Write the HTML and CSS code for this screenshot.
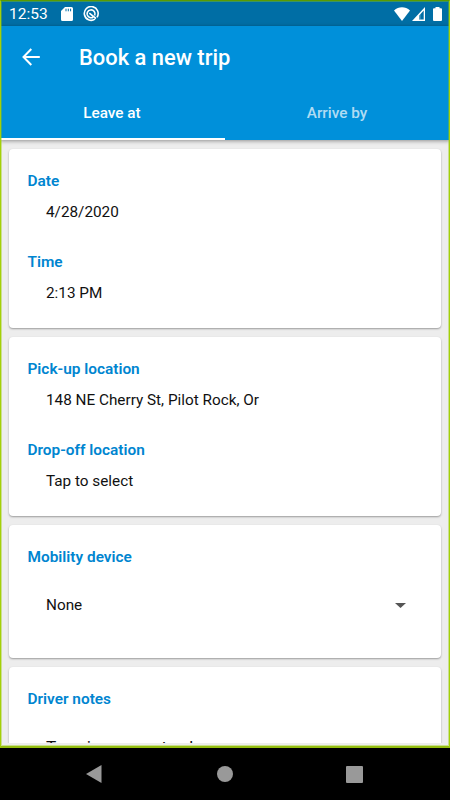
FILE: index.html
```
<!DOCTYPE html>
<html lang="en">
<head>
  <meta charset="UTF-8">
  <title>Book a new trip</title>
  <link rel="stylesheet" href="styles.css">
</head>
<body>
  <div class="screen">

    <!-- Status bar -->
    <div class="status-bar">
      <span class="clock">12:53</span>
      <svg class="sd-icon" width="12" height="14" viewBox="0 0 12 14">
        <path fill="#fff" d="M4 0h6.500a1.500 1.500 0 0 1 1.500 1.500v11a1.500 1.500 0 0 1-1.500 1.500h-9A1.500 1.500 0 0 1 0 12.500V4z"/>
        <path stroke="#006ea5" stroke-width="1" d="M5 1.700v2.600M7.300 1.700v2.600M9.600 1.700v2.600"/>
      </svg>
      <svg class="sync-icon" width="16" height="16" viewBox="0 0 16 16" fill="none" stroke="#fff">
        <path stroke-width="1.600" d="M12 13.200A6.900 6.900 0 1 1 14 11.200"/>
        <path stroke-width="1.600" d="M4.800 10.300A4 4 0 1 1 11.700 9.500"/>
        <path stroke-width="1.600" d="M6.300 7.200l6.700 5.300M5 9.800c1.200 2 3.400 2.500 5 1.500"/>
      </svg>
      <span class="spacer"></span>
      <svg class="wifi-icon" width="16" height="14" viewBox="0 0 16 14">
        <path fill="#fff" d="M0 3.400C4.600-.9 11.400-.9 16 3.400L8 14z"/>
      </svg>
      <svg class="signal-icon" width="13" height="14" viewBox="0 0 13 14">
        <path fill="#fff" fill-rule="evenodd" d="M13 0v14H0zM11.700 3.500L7 8.700v3.900h4.700z"/>
        <path fill="#fff" opacity=".35" d="M7 8.700l1.500-1.700v5.600H7z"/>
      </svg>
      <svg class="battery-icon" width="9" height="14" viewBox="0 0 9 14">
        <path fill="#fff" d="M2.500 1.300V0h4v1.300H8a1 1 0 0 1 1 1V13a1 1 0 0 1-1 1H1a1 1 0 0 1-1-1V2.300a1 1 0 0 1 1-1z"/>
      </svg>
    </div>

    <header class="app-bar">
      <div class="toolbar">
        <svg class="back" width="18" height="18" viewBox="0 0 18 18" fill="none" stroke="#fff" stroke-width="2">
          <path d="M17.800 9H1.500M9.300 1L1.500 9l7.800 8"/>
        </svg>
        <h1>Book a new trip</h1>
      </div>
      <nav class="tabs">
        <a class="tab active">Leave at</a>
        <a class="tab">Arrive by</a>
      </nav>
    </header>

    <main class="content">
      <section class="card">
        <h2>Date</h2>
        <p>4/28/2020</p>
        <h2>Time</h2>
        <p>2:13 PM</p>
      </section>

      <section class="card">
        <h2>Pick-up location</h2>
        <p>148 NE Cherry St, Pilot Rock, Or</p>
        <h2>Drop-off location</h2>
        <p>Tap to select</p>
      </section>

      <section class="card device">
        <h2>Mobility device</h2>
        <div class="select">
          <span>None</span>
          <svg width="11" height="5" viewBox="0 0 11 5"><path fill="#555" d="M0 0h11L5.500 5z"/></svg>
        </div>
      </section>

      <section class="card notes">
        <h2>Driver notes</h2>
        <p>Type in your notes here</p>
      </section>
    </main>
  </div>

  <!-- Android navigation -->
  <div class="nav-bar">
    <svg width="16" height="18" viewBox="0 0 16 18"><path fill="#999" d="M15.500 0v18L0 9z"/></svg>
    <svg width="17" height="16" viewBox="0 0 17 16"><circle cx="9" cy="8" r="8" fill="#999"/></svg>
    <svg width="17" height="17" viewBox="0 0 17 17"><rect width="17" height="17" rx="1" fill="#999"/></svg>
  </div>
</body>
</html>
```
FILE: styles.css
```
* { box-sizing: border-box; }
body {
  margin: 0;
  height: 800px;
  overflow: hidden;
  background: #000;
  color: #111;
  font-family: Roboto, sans-serif;
}
h1, h2, p { margin: 0; }
svg { display: block; flex: none; }

.screen {
  position: relative;
  display: flex;
  flex-direction: column;
  height: 748px;
  background: #ededed;
}
/* green frame around the app window */
.screen::after {
  content: "";
  position: absolute;
  inset: 0;
  border: 1px solid #a4d007;
  border-top-color: #5a9a00;
  border-bottom: 2px solid #94bd10;
  box-shadow: inset 0 0 0 1px rgba(150, 205, 0, .4);
  z-index: 3;
}

.status-bar {
  display: flex;
  align-items: center;
  height: 26px;
  padding: 1px 8px 0 9px;
  background: #006ea5;
  color: #fff;
}
.clock { width: 52px; font-size: 15.500px; }
.sync-icon { margin-left: 10px; }
.spacer { flex: 1; }
.signal-icon { margin-left: 2px; }
.battery-icon { margin-left: 8px; }

.app-bar {
  position: relative;
  z-index: 1;
  height: 114px;
  background: #0090da;
  color: #fff;
  box-shadow: 0 1px 4px rgba(0, 0, 0, .4);
}
.toolbar {
  display: flex;
  align-items: center;
  height: 62px;
  padding-left: 22px;
}
.toolbar h1 {
  margin-left: 39px;
  font-size: 21.900px;
  font-weight: 500;
}
.tabs { display: flex; height: 52px; }
.tab {
  flex: 1;
  padding: 16px 1px 0 0;
  text-align: center;
  font-size: 15.300px;
  line-height: 18px;
  font-weight: 500;
  color: rgba(255, 255, 255, .7);
}
.tab.active {
  border-bottom: 2px solid #fff;
  color: #fff;
}

.content {
  flex: none;
  height: 603px;
  padding: 9px 9px 0;
  overflow: hidden;
}
.card {
  height: 179px;
  margin-bottom: 9px;
  padding: 22px 19px 0 18.500px;
  border-radius: 4px;
  background: #fff;
  box-shadow: 0 1px 2px rgba(0, 0, 0, .35);
}
.card h2 {
  font-size: 15.400px;
  line-height: 20px;
  font-weight: 600;
  color: #0085d0;
}
.card p {
  margin: 12px 0 30px 18.500px;
  font-size: 15.300px;
  line-height: 19px;
}
.card.device { height: 133px; }
.select {
  display: flex;
  align-items: center;
  justify-content: space-between;
  margin: 28px 16px 0 18.500px;
  font-size: 15.300px;
  line-height: 20px;
}
.card.notes p {
  margin-top: 29px;
  font-size: 17.200px;
}

.nav-bar {
  display: flex;
  align-items: center;
  justify-content: space-between;
  height: 52px;
  padding: 0 87px 0 86px;
}
```
